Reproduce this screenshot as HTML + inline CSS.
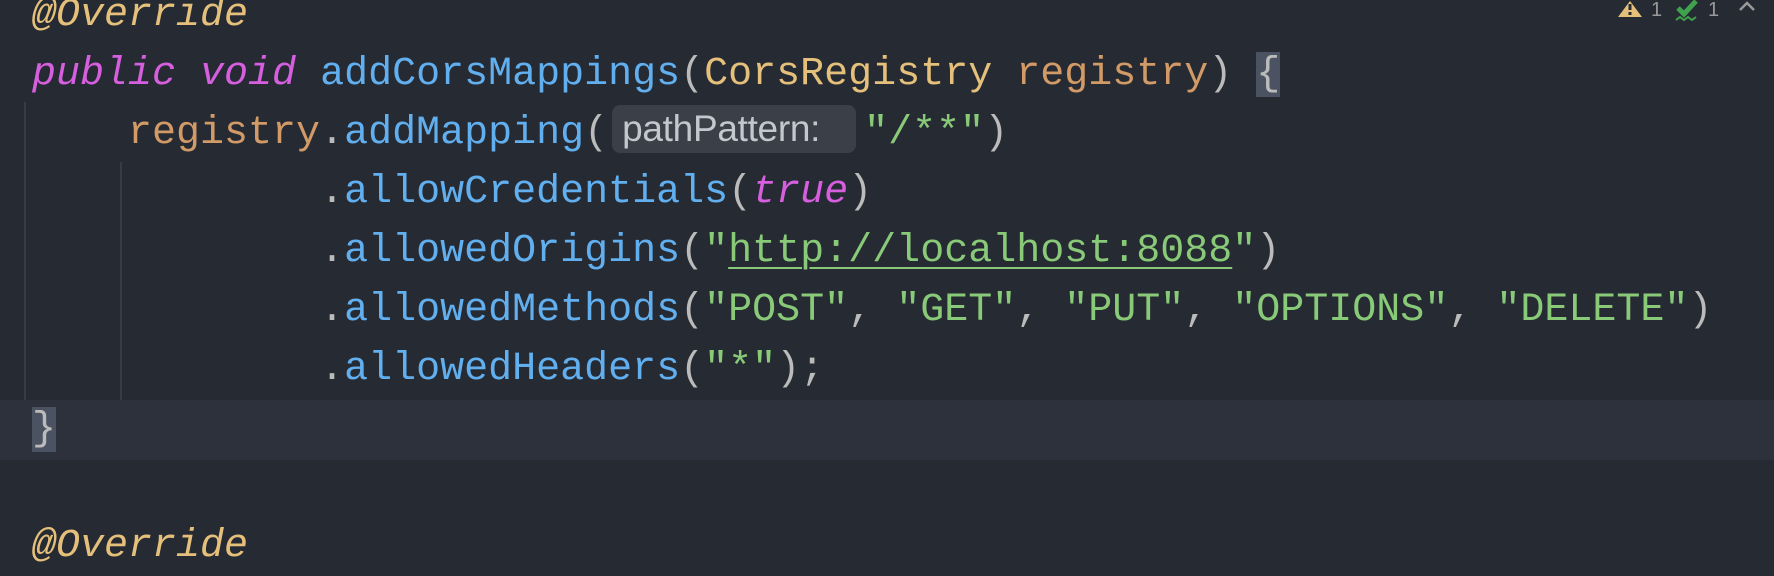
<!DOCTYPE html>
<html><head><meta charset="utf-8"><style>
html,body{margin:0;padding:0}
body{width:1774px;height:540px;background:#262a33;overflow:hidden;position:relative;font-family:"Liberation Mono","DejaVu Sans Mono",monospace;font-size:40px;color:#bbbbbb}
.l{position:absolute;left:32px;height:59px;line-height:59px;white-space:pre}
.k{color:#d55fde;font-style:italic}
.a{color:#e5c07b;font-style:italic}
.m{color:#61afef}
.c{color:#e5c07b}
.p{color:#d19a66}
.s{color:#89ca78}
.hl{position:absolute;left:0;right:0;top:400px;height:60px;background:#2c313c}
.g{position:absolute;width:2px;background:#363b45}
.hint{display:inline-block;vertical-align:middle;height:48px;line-height:48px;width:244px;margin:-6px 8px 0 4px;padding-left:10px;background:#3b3f48;border-radius:8px;color:#c3c7ce;font-family:"Liberation Sans",sans-serif;font-size:37px;text-align:left;box-sizing:border-box;letter-spacing:-0.3px}
.br{background:#4b5363}
u{text-decoration-thickness:2px;text-underline-offset:6px}
</style></head><body>
<div class="hl"></div>
<div class="g" style="left:24px;top:102px;height:298px"></div>
<div class="g" style="left:120px;top:162px;height:238px"></div>
<div class="l" style="top:-14px"><span class="a">@Override</span></div>
<div class="l" style="top:45px"><span class="k">public</span> <span class="k">void</span> <span class="m">addCorsMappings</span>(<span class="c">CorsRegistry</span> <span class="p">registry</span>) <span class="br">{</span></div>
<div class="l" style="top:104px">    <span class="p">registry</span>.<span class="m">addMapping</span>(<span class="hint">pathPattern:</span><span class="s">"/**"</span>)</div>
<div class="l" style="top:163px">            .<span class="m">allowCredentials</span>(<span class="k">true</span>)</div>
<div class="l" style="top:222px">            .<span class="m">allowedOrigins</span>(<span class="s">"<u>http://localhost:8088</u>"</span>)</div>
<div class="l" style="top:281px">            .<span class="m">allowedMethods</span>(<span class="s">"POST"</span>, <span class="s">"GET"</span>, <span class="s">"PUT"</span>, <span class="s">"OPTIONS"</span>, <span class="s">"DELETE"</span>)</div>
<div class="l" style="top:340px">            .<span class="m">allowedHeaders</span>(<span class="s">"*"</span>);</div>
<div class="l" style="top:400px"><span class="br">}</span></div>
<div class="l" style="top:517px"><span class="a">@Override</span></div>
<svg style="position:absolute;left:1618px;top:0" width="150" height="24" viewBox="0 0 150 24">
<path d="M12 1 L24 17 L0 17 Z" fill="#e5c07b"/>
<rect x="10.5" y="4" width="3" height="6" fill="#262a33"/><rect x="10.5" y="12" width="3" height="3" fill="#262a33"/>
<text x="33" y="16" fill="#999" font-family="Liberation Sans" font-size="20">1</text>
<path d="M60 8 L66 14 L78 1" stroke="#3fa34d" stroke-width="5" fill="none"/>
<path d="M58 20 L62 17 L66 20 L70 17 L74 20 L78 17" stroke="#3fa34d" stroke-width="2" fill="none"/>
<text x="90" y="16" fill="#999" font-family="Liberation Sans" font-size="20">1</text>
<path d="M122 10 L129 3 L136 10" stroke="#999" stroke-width="2.5" fill="none"/>
</svg>
</body></html>
